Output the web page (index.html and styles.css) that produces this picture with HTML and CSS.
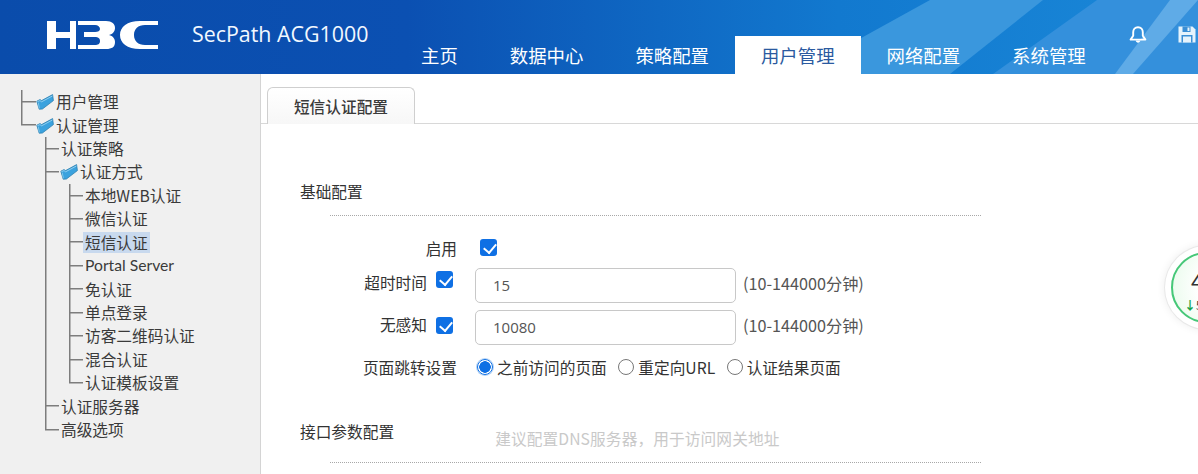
FILE: index.html
```html
<!DOCTYPE html>
<html lang="zh-CN">
<head>
<meta charset="utf-8">
<title>SecPath ACG1000</title>
<link rel="stylesheet" href="styles.css">
</head>
<body>
<svg class="defs" width="0" height="0" aria-hidden="true">
  <symbol id="folder" viewBox="0 0 18 17">
    <path d="M.8 8.2 L4 6.6 L5.6 7.6 L16.6 1.6 L17.4 7.6 L6.4 16 L3.2 16.2 Z" fill="#3ba2de" stroke="#2c7fae" stroke-width=".8" stroke-linejoin="round"/>
    <path d="M1.4 8.6 L4 7.6 L5.6 8.8 L16.4 3" fill="none" stroke="#a6d9f4" stroke-width=".8"/>
    <path d="M3.4 15.4 L2.2 9.6" fill="none" stroke="#8fd0f0" stroke-width=".8"/>
  </symbol>
</svg>
<header class="topbar">
  <svg class="bands" viewBox="0 0 1198 74" preserveAspectRatio="none" aria-hidden="true">
    <defs>
      <linearGradient id="base" x1="0" x2="1" y1="0" y2="0">
        <stop offset="0" stop-color="#0a4cab"/>
        <stop offset=".34" stop-color="#0b50b2"/>
        <stop offset=".7" stop-color="#1279cf"/>
        <stop offset="1" stop-color="#1a88d8"/>
      </linearGradient>
    </defs>
    <rect width="1198" height="74" fill="url(#base)"/>
    <polygon points="796,74 930,0 1043,0 950,74" fill="#3a97dd"/>
    <polygon points="993,74 1097,0 1198,0 1198,74" fill="#3490dc"/>
    <polygon points="1115,74 1170,0 1198,0 1133,74" fill="#5fabe7"/>
  </svg>
  <div class="brand">
    <svg class="logo" viewBox="0 0 112 29" role="img" aria-label="H3C">
      <path fill="#fff" d="M1 0h9v11h14V0h6v28h-6V17H10v11H1z"/>
      <path fill="#fff" d="M32 0h28c6 0 9 3 9 7 0 3-2 6-6 7 4 1 6 4 6 7 0 5-3 7-9 7H32v-4h17c3 0 5-1 5-4s-2-4-5-4H38v-5h11c3 0 5-1 5-3s-2-4-5-4H32z"/>
      <path fill="#fff" d="M112 0H94C81 0 74 6 74 14s7 14 20 14h18v-4H99c-7 0-11-4-11-10s4-10 11-10h13z"/>
    </svg>
    <span class="product">SecPath ACG1000</span>
  </div>
  <nav class="mainnav">
    <a class="navitem">主页</a>
    <a class="navitem">数据中心</a>
    <a class="navitem">策略配置</a>
    <a class="navitem active">用户管理</a>
    <a class="navitem">网络配置</a>
    <a class="navitem">系统管理</a>
  </nav>
  <div class="tools">
    <svg class="tool" viewBox="0 0 18 17" aria-hidden="true">
      <path d="M9 1.2c-3 0-4.8 2.2-4.8 5v3.6L1.6 13.6h14.8l-2.6-3.8V6.2c0-2.8-1.8-5-4.8-5z" fill="none" stroke="#fff" stroke-width="1.9" stroke-linejoin="round"/>
      <path d="M6.6 14.6c.4 1.4 1.2 2.1 2.4 2.1s2-.7 2.4-2.1z" fill="#fff"/>
    </svg>
    <svg class="tool" viewBox="0 0 18 17" aria-hidden="true">
      <path d="M.5.5h14l3 3v13H.5z" fill="#e6f3fc"/>
      <rect x="4.5" y=".5" width="8" height="5.5" fill="#3b8fd6"/>
      <rect x="9.5" y="1.5" width="2" height="3.5" fill="#e6f3fc"/>
      <rect x="3.5" y="9" width="11" height="7.5" fill="#3b8fd6"/>
      <rect x="5" y="10.5" width="8" height="6" fill="#e6f3fc"/>
    </svg>
  </div>
</header>
<div class="body">
  <aside class="sidebar">
    <ul class="tree">
      <li class="node"><i class="tee"></i><svg class="folder"><use href="#folder"/></svg><span class="label">用户管理</span></li>
      <li class="node"><i class="end"></i><svg class="folder"><use href="#folder"/></svg><span class="label">认证管理</span></li>
      <li class="node"><i class="blank"></i><i class="tee short"></i><span class="label leaf">认证策略</span></li>
      <li class="node"><i class="blank"></i><i class="tee short"></i><svg class="folder"><use href="#folder"/></svg><span class="label">认证方式</span></li>
      <li class="node"><i class="blank"></i><i class="guide"></i><i class="tee short"></i><span class="label leaf">本地WEB认证</span></li>
      <li class="node"><i class="blank"></i><i class="guide"></i><i class="tee short"></i><span class="label leaf">微信认证</span></li>
      <li class="node"><i class="blank"></i><i class="guide"></i><i class="tee short"></i><span class="label leaf current">短信认证</span></li>
      <li class="node"><i class="blank"></i><i class="guide"></i><i class="tee short"></i><span class="label leaf latin">Portal Server</span></li>
      <li class="node"><i class="blank"></i><i class="guide"></i><i class="tee short"></i><span class="label leaf">免认证</span></li>
      <li class="node"><i class="blank"></i><i class="guide"></i><i class="tee short"></i><span class="label leaf">单点登录</span></li>
      <li class="node"><i class="blank"></i><i class="guide"></i><i class="tee short"></i><span class="label leaf">访客二维码认证</span></li>
      <li class="node"><i class="blank"></i><i class="guide"></i><i class="tee short"></i><span class="label leaf">混合认证</span></li>
      <li class="node"><i class="blank"></i><i class="guide"></i><i class="end short"></i><span class="label leaf">认证模板设置</span></li>
      <li class="node"><i class="blank"></i><i class="tee short"></i><span class="label leaf">认证服务器</span></li>
      <li class="node"><i class="blank"></i><i class="end short"></i><span class="label leaf">高级选项</span></li>
    </ul>
  </aside>
  <main class="content">
    <div class="tabbar"><div class="tab">短信认证配置</div></div>
    <section class="section first">
      <h2 class="section-title">基础配置</h2>
      <div class="rule"></div>
      <div class="form">
        <div class="row row-enable">
          <div class="row-label"><span>启用</span></div>
          <span class="check"></span>
        </div>
        <div class="row row-input">
          <div class="row-label"><span>超时时间</span><span class="check check-high"></span></div>
          <div class="field">15</div>
          <span class="hint">(10-144000分钟)</span>
        </div>
        <div class="row row-input">
          <div class="row-label"><span>无感知</span><span class="check check-low"></span></div>
          <div class="field">10080</div>
          <span class="hint">(10-144000分钟)</span>
        </div>
        <div class="row row-radio">
          <div class="row-label"><span>页面跳转设置</span></div>
          <label class="radio-item"><span class="radio on"></span>之前访问的页面</label>
          <label class="radio-item"><span class="radio"></span>重定向URL</label>
          <label class="radio-item"><span class="radio"></span>认证结果页面</label>
        </div>
      </div>
    </section>
    <section class="section">
      <div class="section-head">
        <h2 class="section-title">接口参数配置</h2>
        <span class="note">建议配置DNS服务器，用于访问网关地址</span>
      </div>
      <div class="rule"></div>
    </section>
    <div class="speed">
      <span class="speed-num">4</span>
      <span class="speed-down"><b>↓</b>5</span>
    </div>
  </main>
</div>
</body>
</html>
```
FILE: styles.css
```css
* { box-sizing: border-box; }
html, body { margin: 0; height: 100%; overflow: hidden; background: #fff; }
body {
  font-family: "Noto Sans CJK SC", "Noto Sans", sans-serif;
  font-size: 15.7px;
  color: #333;
}
.defs { display: block; height: 0; }

/* header */
.topbar {
  position: relative;
  height: 74px;
  display: flex;
  align-items: flex-end;
  overflow: hidden;
}
.bands { position: absolute; inset: 0; width: 100%; height: 100%; }
.brand {
  position: relative;
  width: 395px;
  height: 100%;
  flex: none;
  display: flex;
  align-items: center;
  padding-left: 46px;
  padding-bottom: 3px;
}
.logo { width: 112px; height: 29px; flex: none; }
.product {
  margin-left: 34px;
  color: #f2f8ff;
  font-family: "Open Sans", sans-serif;
  font-size: 21.4px;
  white-space: nowrap;
  transform: translateY(-2px);
}
.mainnav { position: relative; display: flex; flex: none; }
.navitem {
  height: 38px;
  display: flex;
  align-items: center;
  justify-content: center;
  padding: 0 26px;
  color: #fff;
  font-size: 18.4px;
  white-space: nowrap;
}
.navitem.active { background: #fff; color: #2b5aa0; }
.tools {
  position: relative;
  align-self: flex-start;
  display: flex;
  gap: 31px;
  padding: 26px 0 0 17px;
  flex: none;
}
.tool { width: 18px; height: 17px; display: block; flex: none; }

/* layout */
.body { display: flex; height: 400px; }
.sidebar {
  width: 261px;
  flex: none;
  background: #f0f0f0;
  border-right: 1px solid #d4d4d4;
  padding: 16px 0 0 21px;
}
.tree { list-style: none; margin: 0; padding: 0; }
.node {
  height: 23.43px;
  display: flex;
  align-items: center;
  white-space: nowrap;
}
.node i { display: block; align-self: stretch; flex: none; }
.tee, .end { width: 15px; --ln: #7d7d7d; }
.tee {
  background:
    linear-gradient(var(--ln), var(--ln)) 0 0 / 1.5px 100% no-repeat,
    linear-gradient(var(--ln), var(--ln)) 0 50% / 100% 1.5px no-repeat;
}
.end {
  background:
    linear-gradient(var(--ln), var(--ln)) 0 0 / 1.5px 50% no-repeat,
    linear-gradient(var(--ln), var(--ln)) 0 50% / 100% 1.5px no-repeat;
}
.tee.short, .end.short { width: 14px; }
.blank { width: 24px; }
.guide {
  width: 24px;
  background: linear-gradient(#7d7d7d, #7d7d7d) 0 0 / 1.5px 100% no-repeat;
}
.folder { width: 18px; height: 17px; flex: none; margin-right: 2px; }
.tee.short + .folder { margin-left: 1px; }
.label { line-height: 21px; color: #3a3a3a; }
.leaf { padding: 0 2px; }
.latin { font-family: "Lato", "Noto Sans", sans-serif; font-size: 15.7px; }
.current { background: #c8d9ee; }

/* content */
.content { position: relative; flex: 1; min-width: 0; }
.tabbar {
  height: 50px;
  padding: 13px 0 0 6px;
  border-bottom: 1px solid #d8d8d8;
  display: flex;
}
.tab {
  width: 148px;
  height: 37px;
  border: 1px solid #cfcfcf;
  border-bottom: 0;
  border-radius: 6px 6px 0 0;
  background: linear-gradient(#fff, #f7f7f7);
  display: flex;
  align-items: center;
  justify-content: center;
  font-weight: 500;
  color: #3a3a3a;
}
.section { padding-left: 39px; }
.section.first { padding-top: 56px; }
.section-title { margin: 0; font-size: 15.7px; font-weight: 400; color: #333; line-height: 24px; }
.section-head { display: flex; margin-top: 35px; }
.note { margin-left: 101px; margin-top: 7px; color: #c9c9c9; line-height: 24px; letter-spacing: .1px; }
.rule { width: 651px; margin: 11px 0 0 30px; border-top: 1px dotted #a8a8a8; }
.form { padding-top: 14px; }
.row { display: flex; align-items: center; }
.row-label {
  width: 157px;
  flex: none;
  display: flex;
  justify-content: flex-end;
  align-items: center;
  gap: 9px;
}
.row-enable { height: 37px; }
.row-enable .check { margin-left: 23px; margin-bottom: 2px; }
.row-input { height: 36px; margin-bottom: 6px; }
.row-input .row-label { padding: 0 4px 6px 0; }
.row-input .field { margin-left: 18px; }
.check {
  width: 17px;
  height: 17px;
  flex: none;
  border-radius: 3px;
  background: #0f70e4;
  position: relative;
}
.check-high { margin-bottom: 6px; }
.check-low { margin-top: 2px; }
.check::after {
  content: "";
  position: absolute;
  left: 5.5px;
  top: 2px;
  width: 6px;
  height: 10px;
  border: solid #fff;
  border-width: 0 2.4px 2.4px 0;
  transform: rotate(40deg);
}
.field {
  width: 261px;
  height: 35px;
  border: 1px solid #c8c8c8;
  border-radius: 5px;
  padding: 0 17px;
  display: flex;
  align-items: center;
  color: #555;
  font-family: "Open Sans", sans-serif;
  font-size: 15px;
}
.hint { margin: 0 0 4px 7px; color: #555; font-size: 16.2px; }
.row-radio { height: 36px; margin-top: -2px; }
.radio-item { display: flex; align-items: center; margin-right: 11.5px; white-space: nowrap; }
.row-label + .radio-item { margin-left: 20px; }
.radio {
  width: 16px;
  height: 16px;
  flex: none;
  margin-right: 4px;
  border: 1px solid #777;
  border-radius: 50%;
  background: #fff;
}
.radio.on {
  border: 1px solid #0f70e4;
  background: radial-gradient(circle, #0f70e4 0 5.5px, #fff 6px);
  box-shadow: 0 0 0 1px #b6d4f5;
}
.speed {
  position: absolute;
  left: 910px;
  top: 178px;
  width: 71px;
  height: 71px;
  border-radius: 50%;
  border: 2px solid #46c878;
  background: radial-gradient(circle at 80% 50%, #fff 0 45%, #e6fbe9 100%);
  box-shadow: 0 0 0 6px #fff, 0 0 0 7px #e8e8e8, 0 0 8px 7px #eee;
}
.speed-num { position: absolute; left: 18px; top: 11px; font-size: 22px; color: #333; line-height: 30px; }
.speed-down { position: absolute; left: 11px; top: 42px; font-size: 12px; color: #333; line-height: 18px; white-space: nowrap; }
.speed-down b { color: #16a34a; font-weight: 700; }
```
